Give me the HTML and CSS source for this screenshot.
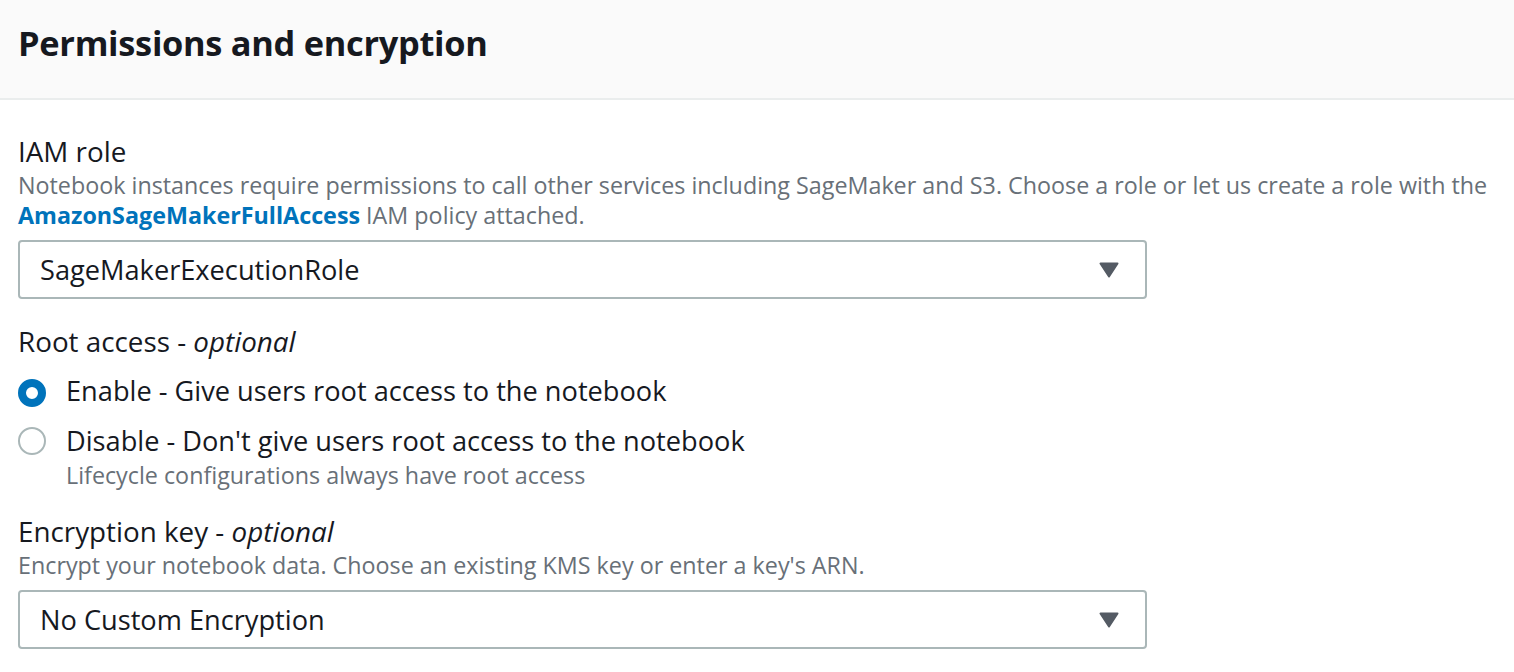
FILE: index.html
```html
<!DOCTYPE html>
<html>
<head>
<meta charset="utf-8">
<link rel="stylesheet" href="styles.css">
</head>
<body>
<div class="panel">
  <div class="panel-header">
    <h2 class="title">Permissions and encryption</h2>
  </div>
  <div class="panel-body">
    <div class="field">
      <div class="label">IAM role</div>
      <div class="desc">Notebook instances require permissions to call other services including SageMaker and S3. Choose a role or let us create a role with the <a class="link">AmazonSageMakerFullAccess</a> IAM policy attached.</div>
      <div class="select">
        <span class="select-text">SageMakerExecutionRole</span>
        <svg class="caret" width="20" height="16" viewBox="0 0 20 16"><path d="M1.5 1.5 L18.5 1.5 L10 14.5 Z" fill="#545b64" stroke="#545b64" stroke-width="2" stroke-linejoin="round"/></svg>
      </div>
    </div>
    <div class="field root">
      <div class="label">Root access - <i>optional</i></div>
      <div class="radios">
        <div class="radio-row">
          <span class="radio checked"></span>
          <span class="radio-label">Enable - Give users root access to the notebook</span>
        </div>
        <div class="radio-row">
          <span class="radio"></span>
          <div class="radio-text">
            <span class="radio-label">Disable - Don't give users root access to the notebook</span>
            <span class="radio-hint">Lifecycle configurations always have root access</span>
          </div>
        </div>
      </div>
    </div>
    <div class="field enc">
      <div class="label">Encryption key - <i>optional</i></div>
      <div class="desc">Encrypt your notebook data. Choose an existing KMS key or enter a key's ARN.</div>
      <div class="select">
        <span class="select-text">No Custom Encryption</span>
        <svg class="caret" width="20" height="16" viewBox="0 0 20 16"><path d="M1.5 1.5 L18.5 1.5 L10 14.5 Z" fill="#545b64" stroke="#545b64" stroke-width="2" stroke-linejoin="round"/></svg>
      </div>
    </div>
  </div>
</div>
</body>
</html>
```
FILE: styles.css
```css
* { box-sizing: border-box; }
body {
  margin: 0;
  background: #fff;
  font-family: "Open Sans", "Noto Sans", sans-serif;
  color: #16191f;
}
.panel-header {
  height: 100px;
  background: #fafafa;
  border-bottom: 2px solid #eaeded;
  padding: 20px 18px 0;
}
.title {
  margin: 0;
  font-size: 34.4px;
  font-weight: 700;
  line-height: 46px;
  letter-spacing: -0.3px;
}
.panel-body {
  padding: 32px 18px 0;
  display: flex;
  flex-direction: column;
}
.field { display: flex; flex-direction: column; }
.field.root { margin-top: 23px; }
.field.enc { margin-top: 21px; }
.label {
  font-size: 27.8px;
  line-height: 38px;
}
.label i { font-style: italic; }
.desc {
  font-size: 23.3px;
  line-height: 30px;
  color: #687078;
  max-width: 1490px;
}
.link {
  color: #0073bb;
  font-weight: 700;
  text-decoration: none;
}
.select {
  margin-top: 10px;
  width: 1129px;
  height: 59px;
  border: 2px solid #aab7b8;
  border-radius: 4px;
  display: flex;
  align-items: center;
  justify-content: space-between;
  padding: 0 26px 0 20px;
}
.select-text { font-size: 27.2px; }
.radios { display: flex; flex-direction: column; gap: 14px; margin-top: 13px; }
.radio-row { display: flex; align-items: flex-start; gap: 20px; }
.radio {
  width: 28px;
  height: 28px;
  border-radius: 50%;
  border: 2px solid #aab7b8;
  flex: none;
  margin-top: 4px;
}
.radio.checked {
  border: 8px solid #0073bb;
  background: #fff;
  margin-top: 6px;
}
.radio-text { display: flex; flex-direction: column; }
.radio-label { font-size: 27.2px; line-height: 36px; }
.radio-hint { font-size: 23.3px; line-height: 32px; color: #687078; }
```
